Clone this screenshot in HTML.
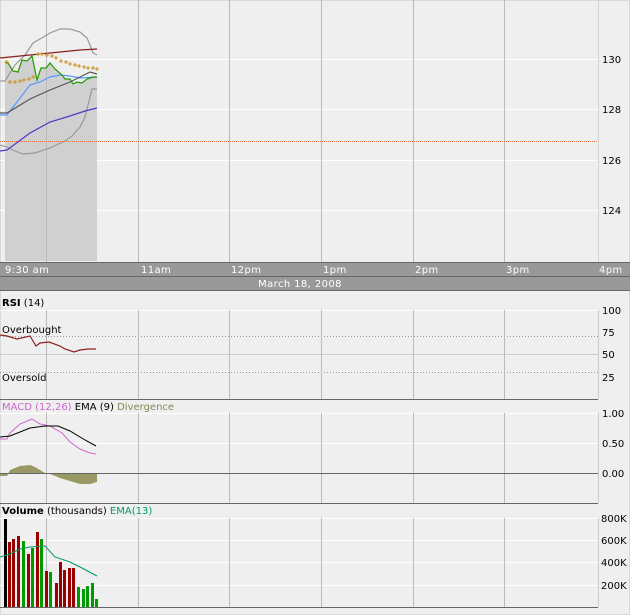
<!DOCTYPE html>
<html><head><meta charset="utf-8"><style>
body{margin:0;background:#efefef;}
svg{display:block;font-family:"DejaVu Sans","Liberation Sans",sans-serif;font-size:10px;}
</style></head><body>
<svg width="630" height="615" viewBox="0 0 630 615" xmlns="http://www.w3.org/2000/svg">
<rect width="630" height="615" fill="#efefef"/>
<rect x="0.5" y="0.5" width="629" height="614" fill="none" stroke="#d8d8d8"/>
<g stroke="#fff" stroke-width="1">
<line x1="0" y1="59.5" x2="598" y2="59.5"/><line x1="0" y1="109.5" x2="598" y2="109.5"/>
<line x1="0" y1="160.5" x2="598" y2="160.5"/><line x1="0" y1="210.5" x2="598" y2="210.5"/>
</g>
<polygon fill="#d0d0d0" points="5,62 8,63 13,71 18,72 22,60 27,61 32,56 37,80 41,68 46,68 50,63 55,69 62,75 65,79 70,79 73,84 77,82 82,83 87,79 93,77 97,77 97,261 5,261"/>
<g stroke="#bbb"><line x1="46.5" y1="0" x2="46.5" y2="262"/><line x1="138.5" y1="0" x2="138.5" y2="262"/><line x1="229.5" y1="0" x2="229.5" y2="262"/><line x1="321.5" y1="0" x2="321.5" y2="262"/><line x1="413.5" y1="0" x2="413.5" y2="262"/><line x1="504.5" y1="0" x2="504.5" y2="262"/></g>
<line x1="598.5" y1="0" x2="598.5" y2="262" stroke="#d4d4d4"/>
<line x1="0" y1="141.5" x2="598" y2="141.5" stroke="#e0703a" stroke-dasharray="1,1"/>
<g fill="none" stroke-width="1.2">
<polyline stroke="#999" points="0,81 5,81 15,65 25,55 33,43 40,39 50,33 60,29 70,29 80,32 87,38 90,45 93,53 97,55"/>
<polyline stroke="#999" points="0,145 7,147 15,151 23,154 35,153 50,148 65,141 72,136 80,127 85,117 88,105 92,89 97,89"/>
<polyline stroke="#8b2020" points="0,58 20,56 40,54 60,52 80,50 97,49"/>
<polyline stroke="#5599ff" points="0,115 7,115 30,85 40,82 50,77 60,75 70,76 80,78 97,77"/>
<polyline stroke="#555" points="0,113 7,113 30,99 50,90 70,82 90,72 97,74"/>
<polyline stroke="#5533cc" points="0,151 7,150 30,133 50,122 70,116 85,111 97,108"/>
<polyline stroke="#229900" points="5,62 8,63 13,71 18,72 22,60 27,61 32,56 37,80 41,68 46,68 50,63 55,69 62,75 65,79 70,79 73,84 77,82 82,83 87,79 93,77 97,77"/>
</g>
<path stroke="#c8901c" stroke-width="1" fill="none" d="M4.5,62h4M6.5,60v4 M8,82h4M10,80v4 M13,82h4M15,80v4 M18,81h4M20,79v4 M22,80h4M24,78v4 M27,79h4M29,77v4 M31,77h4M33,75v4 M36,54h4M38,52v4 M40,54h4M42,52v4 M45,55h4M47,53v4 M50,56h4M52,54v4 M54,58h4M56,56v4 M59,61h4M61,59v4 M64,62h4M66,60v4 M68,64h4M70,62v4 M73,65h4M75,63v4 M77,66h4M79,64v4 M82,67h4M84,65v4 M86,68h4M88,66v4 M91,68h4M93,66v4 M95,69h4M97,67v4"/>
<g fill="#000"><text x="602" y="63">130</text><text x="602" y="113">128</text><text x="602" y="164">126</text><text x="602" y="214">124</text></g>
<rect x="0" y="262" width="630" height="29" fill="#999"/>
<line x1="0" y1="262.5" x2="630" y2="262.5" stroke="#666"/>
<line x1="0" y1="276.5" x2="630" y2="276.5" stroke="#666"/>
<line x1="0" y1="290.5" x2="630" y2="290.5" stroke="#666"/>
<g fill="#fff" letter-spacing="0.4"><text x="5" y="273">9:30 am</text><text x="141" y="273">11am</text><text x="231" y="273">12pm</text><text x="323" y="273">1pm</text><text x="415" y="273">2pm</text><text x="506" y="273">3pm</text><text x="599" y="273">4pm</text>
<text x="300" y="287" text-anchor="middle">March 18, 2008</text></g>
<text x="2" y="306"><tspan font-weight="bold">RSI</tspan> (14)</text>
<line x1="0" y1="310.5" x2="598" y2="310.5" stroke="#fff"/>
<line x1="0" y1="354.5" x2="598" y2="354.5" stroke="#ccc"/>
<g stroke="#999" stroke-dasharray="1,2"><line x1="0" y1="336.5" x2="598" y2="336.5"/><line x1="0" y1="372.5" x2="598" y2="372.5"/></g>
<g stroke="#bbb"><line x1="46.5" y1="310" x2="46.5" y2="399"/><line x1="138.5" y1="310" x2="138.5" y2="399"/><line x1="229.5" y1="310" x2="229.5" y2="399"/><line x1="321.5" y1="310" x2="321.5" y2="399"/><line x1="413.5" y1="310" x2="413.5" y2="399"/><line x1="504.5" y1="310" x2="504.5" y2="399"/></g>
<line x1="598.5" y1="310" x2="598.5" y2="399" stroke="#ccc"/>
<line x1="0" y1="399.5" x2="598" y2="399.5" stroke="#666"/>
<text x="2" y="333">Overbought</text><text x="2" y="381">Oversold</text>
<polyline fill="none" stroke="#8b2020" stroke-width="1.2" points="0,335 7,336 17,339 30,336 36,346 40,343 49,342 60,346 65,349 74,352 80,350 88,349 96,349"/>
<g fill="#000"><text x="602" y="314">100</text><text x="602" y="336">75</text><text x="602" y="358">50</text><text x="602" y="381">25</text></g>
<text x="2" y="410"><tspan fill="#cc66cc">MACD (12,26)</tspan> EMA (9) <tspan fill="#888855">Divergence</tspan></text>
<line x1="0" y1="413.5" x2="598" y2="413.5" stroke="#fff"/>
<line x1="0" y1="443.5" x2="598" y2="443.5" stroke="#fff"/>
<g stroke="#bbb"><line x1="46.5" y1="413" x2="46.5" y2="503"/><line x1="138.5" y1="413" x2="138.5" y2="503"/><line x1="229.5" y1="413" x2="229.5" y2="503"/><line x1="321.5" y1="413" x2="321.5" y2="503"/><line x1="413.5" y1="413" x2="413.5" y2="503"/><line x1="504.5" y1="413" x2="504.5" y2="503"/></g>
<line x1="598.5" y1="413" x2="598.5" y2="503" stroke="#ccc"/>
<polygon fill="#999966" points="0,473 0,476 7,476 10,470 20,466 30,465 35,467 45,473 50,474 60,478 70,481 80,484 90,484 97,482 97,473"/>
<line x1="0" y1="473.5" x2="598" y2="473.5" stroke="#666"/>
<line x1="0" y1="503.5" x2="598" y2="503.5" stroke="#666"/>
<polyline fill="none" stroke="#cc66cc" points="0,439 7,439 10,433 20,424 32,419 40,424 50,426 62,433 70,442 80,449 90,453 96,454"/>
<polyline fill="none" stroke="#000" points="0,437 10,436 30,428 45,426 58,426 70,431 85,440 96,446"/>
<g fill="#000"><text x="602" y="417">1.00</text><text x="602" y="447">0.50</text><text x="602" y="477">0.00</text></g>
<text x="2" y="514"><tspan font-weight="bold">Volume</tspan> (thousands) <tspan fill="#009966">EMA(13)</tspan></text>
<g stroke="#fff"><line x1="0" y1="518.5" x2="598" y2="518.5"/><line x1="0" y1="540.5" x2="598" y2="540.5"/><line x1="0" y1="562.5" x2="598" y2="562.5"/><line x1="0" y1="585.5" x2="598" y2="585.5"/></g>
<g stroke="#bbb"><line x1="46.5" y1="518" x2="46.5" y2="607"/><line x1="138.5" y1="518" x2="138.5" y2="607"/><line x1="229.5" y1="518" x2="229.5" y2="607"/><line x1="321.5" y1="518" x2="321.5" y2="607"/><line x1="413.5" y1="518" x2="413.5" y2="607"/><line x1="504.5" y1="518" x2="504.5" y2="607"/></g>
<line x1="598.5" y1="518" x2="598.5" y2="607" stroke="#ccc"/>
<g>
<rect x="4" y="519" width="3" height="88" fill="#000"/>
<rect x="8" y="542" width="3" height="65" fill="#990000"/>
<rect x="12" y="539" width="3" height="68" fill="#990000"/>
<rect x="17" y="536" width="3" height="71" fill="#990000"/>
<rect x="22" y="541" width="3" height="66" fill="#009900"/>
<rect x="27" y="554" width="3" height="53" fill="#990000"/>
<rect x="31" y="548" width="3" height="59" fill="#009900"/>
<rect x="36" y="532" width="3" height="75" fill="#990000"/>
<rect x="40" y="539" width="3" height="68" fill="#009900"/>
<rect x="45" y="571" width="3" height="36" fill="#990000"/>
<rect x="49" y="572" width="3" height="35" fill="#009900"/>
<rect x="55" y="583" width="3" height="24" fill="#990000"/>
<rect x="59" y="562" width="3" height="45" fill="#990000"/>
<rect x="63" y="570" width="3" height="37" fill="#990000"/>
<rect x="68" y="568" width="3" height="39" fill="#990000"/>
<rect x="72" y="568" width="3" height="39" fill="#990000"/>
<rect x="77" y="587" width="3" height="20" fill="#009900"/>
<rect x="82" y="589" width="3" height="18" fill="#009900"/>
<rect x="86" y="586" width="3" height="21" fill="#009900"/>
<rect x="91" y="583" width="3" height="24" fill="#009900"/>
<rect x="95" y="599" width="3" height="8" fill="#009900"/>
</g>
<polyline fill="none" stroke="#009966" points="0,557 10,554 20,549 30,547 45,546 55,557 70,562 80,567 97,576"/>
<line x1="0" y1="607.5" x2="598" y2="607.5" stroke="#666"/>
<g fill="#000"><text x="601" y="522">800K</text><text x="601" y="544">600K</text><text x="601" y="566">400K</text><text x="601" y="589">200K</text></g>
</svg>
</body></html>
